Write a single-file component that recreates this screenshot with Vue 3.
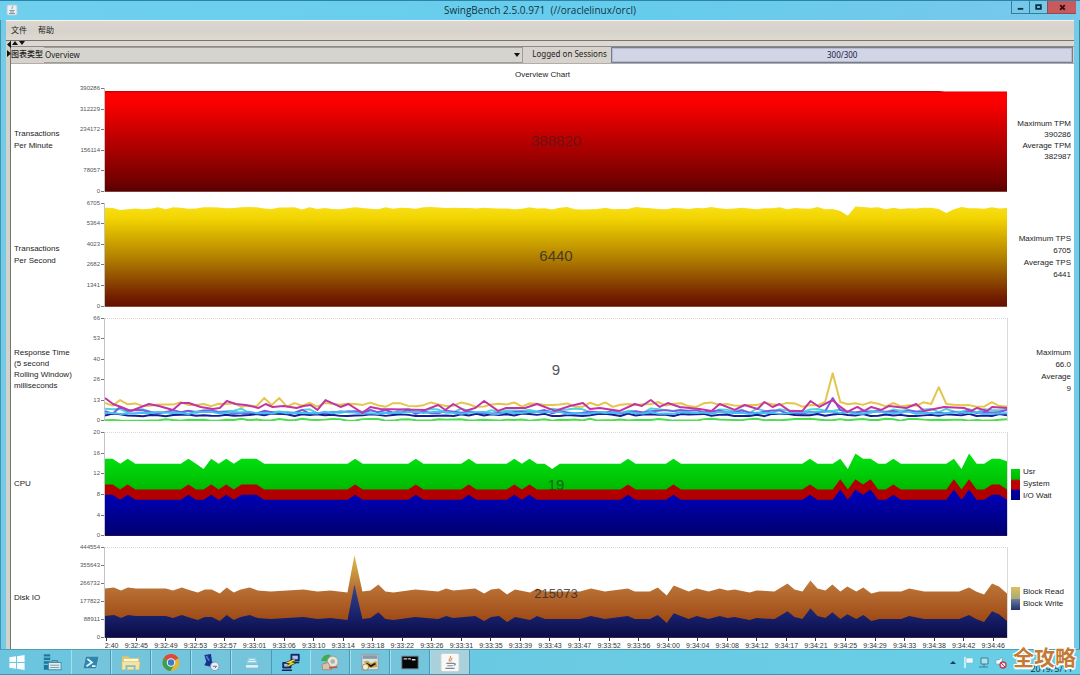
<script setup>
const LEFT = 104
const STEP = 904 / 119

const noise = (i, seed) => {
  const v = Math.sin(i * 12.9898 + seed * 78.233) * 43758.5453
  return v - Math.floor(v)
}
const xAt = (i) => Math.round((LEFT + i * STEP) * 10) / 10

function wave(base, spread, seed, peaks = {}) {
  return Array.from({ length: 120 }, (_, i) => {
    const y = i in peaks ? peaks[i] : base + (noise(i, seed) - 0.5) * spread
    return [xAt(i), Math.round(y * 10) / 10]
  })
}
const line = (pts) => pts.map((p) => p.join(',')).join(' ')
const area = (pts, bottom) => `${LEFT},${bottom} ${line(pts)} 1008,${bottom}`

/* CPU: percentage per sample */
const cpuTop = Array(120).fill(14)
const cpuSys = Array(120).fill(9)
for (const i of [0, 1, 3, 11, 14, 16, 18, 19, 20, 33, 41, 48, 54, 56, 69, 75, 93, 97, 100, 101, 104, 112, 117, 118]) {
  cpuTop[i] = 15
  cpuSys[i] = 10
}
for (const i of [13, 59, 98, 113]) cpuTop[i] = 13
for (const i of [99, 114]) cpuTop[i] = 16
for (const i of [97, 99, 101, 112, 114]) cpuSys[i] = 11
cpuTop[119] = cpuTop[119] + 0.5
const cpu = (vals, less = 0) => vals.map((v, i) => [xAt(i), Math.round((536 - (v - less) * 5.2) * 10) / 10])

/* Disk: sampled curve, write follows read */
const read = [
  [104, 588], [113, 587], [120, 590], [127, 587], [135, 588], [165, 588], [172, 590], [181, 587], [190, 590],
  [197, 592], [204, 589], [211, 589], [219, 593], [226, 587], [233, 592], [240, 589], [249, 587], [257, 590],
  [270, 591], [303, 589], [317, 591], [330, 590], [347, 592], [354, 554], [362, 591], [370, 590], [378, 584],
  [385, 591], [393, 592], [415, 589], [438, 591], [446, 588], [453, 590], [475, 588], [484, 593], [491, 589],
  [499, 588], [507, 594], [515, 589], [530, 592], [537, 588], [545, 591], [580, 591], [591, 588], [605, 591],
  [628, 588], [635, 591], [650, 591], [658, 587], [667, 595], [674, 585], [689, 591], [697, 588], [709, 591],
  [720, 588], [728, 590], [735, 589], [745, 591], [750, 592], [757, 590], [775, 591], [788, 583], [795, 589],
  [803, 591], [811, 580], [818, 588], [826, 590], [833, 584], [841, 591], [848, 586], [857, 591], [864, 587],
  [872, 593], [880, 591], [902, 591], [910, 588], [925, 591], [960, 591], [970, 587], [977, 591], [985, 594],
  [993, 583], [1000, 586], [1008, 593],
]
const write = read.map(([x, y]) => [x, x === 354 ? 584 : y + 28])

const magenta = [
  [104, 398], [112, 404], [120, 407], [130, 411], [148, 404], [158, 406], [172, 410], [180, 403], [188, 403],
  [200, 407], [212, 409], [219, 408], [226, 401], [235, 404], [245, 405], [258, 408], [265, 404], [272, 407],
  [283, 406], [296, 408], [303, 406], [310, 405], [317, 410], [325, 400], [340, 407], [348, 404], [362, 413],
  [370, 407], [380, 409], [425, 410], [438, 405], [445, 410], [453, 404], [465, 411], [475, 408], [484, 401],
  [498, 411], [506, 408], [525, 408], [537, 404], [555, 411], [570, 406], [583, 403], [590, 409], [600, 408],
  [620, 411], [635, 404], [642, 406], [651, 400], [660, 407], [668, 403], [680, 407], [700, 409], [712, 411],
  [720, 404], [735, 410], [745, 405], [758, 409], [765, 402], [773, 407], [780, 404], [790, 411], [803, 411],
  [811, 401], [820, 407], [833, 400], [840, 406], [848, 412], [858, 407], [865, 411], [872, 407], [882, 410],
  [890, 406], [907, 408], [917, 404], [925, 411], [945, 407], [965, 408], [972, 411], [978, 408], [988, 411],
  [993, 407], [1008, 408],
]

const charts = [
  {
    id: 'tpm', label: ['Transactions', 'Per Minute'], view: '104 88 904 104', value: '388820', size: 'big',
    ticks: ['390286', '312229', '234172', '156114', '78057', '0'],
    areas: [{ fill: 'url(#gRed)', points: '104,192 104,90 940,90 946,90.6 1008,90.6 1008,192' }],
    stats: ['Maximum TPM', '390286', 'Average TPM', '382987'],
  },
  {
    id: 'tps', label: ['Transactions', 'Per Second'], view: '104 203 904 104', value: '6440', size: 'big',
    ticks: ['6705', '5364', '4023', '2682', '1341', '0'],
    areas: [{ fill: 'url(#gGold)', points: area(wave(207.3, 2.6, 3, { 2: 209, 96: 208, 97: 210, 98: 215, 99: 205.5, 110: 208, 111: 212 }), 307) }],
    stats: ['Maximum TPS', '6705', 'Average TPS', '6441'], cut: true,
  },
  {
    id: 'rt', label: ['Response Time', '(5 second', 'Rolling Window)', 'milliseconds'], view: '104 318 904 104', value: '9', size: 'big',
    ticks: ['66', '53', '40', '26', '13', '0'], areas: [],
    lines: [
      { stroke: '#e3c64c', points: line(wave(404.5, 5, 1, { 2: 400, 21: 398, 22: 405, 23: 398, 95: 402, 96: 373, 97: 402, 109: 404, 110: 387, 111: 404 })) },
      { stroke: '#4fd4dc', points: line(wave(411, 5, 5)) },
      { stroke: '#7a5be0', points: line(wave(412, 4, 8, { 2: 407, 96: 398 })) },
      { stroke: '#141d94', points: line(wave(415, 2.6, 11)) },
      { stroke: '#45bdf2', points: line(wave(413, 2.6, 14)) },
      { stroke: '#c433a4', points: line(magenta) },
      { stroke: '#4be04b', points: line(wave(420, 2, 17)) },
    ],
    stats: ['Maximum', '66.0', 'Average', '9'], cut: true,
  },
  {
    id: 'cpu', label: ['CPU'], view: '104 432 904 104', value: '19', size: 'big',
    ticks: ['20', '16', '12', '8', '4', '0'],
    areas: [
      { fill: 'url(#gGreen)', points: area(cpu(cpuTop), 536) },
      { fill: '#b20000', points: area(cpu(cpuSys), 536) },
      { fill: 'url(#gBlue)', points: area(cpu(cpuSys, 2), 536) },
    ],
    legend: ['Usr', 'System', 'I/O Wait'],
  },
  {
    id: 'disk', label: ['Disk IO'], view: '104 547 904 91', value: '215073', size: 'small',
    ticks: ['444554', '355643', '266732', '177822', '88911', '0'],
    areas: [
      { fill: 'url(#gRead)', points: area(read, 638) },
      { fill: 'url(#gWrite)', points: area(write, 638) },
    ],
    legend: ['Block Read', 'Block Write'],
  },
]

const times = [
  '9:32:40', '9:32:45', '9:32:49', '9:32:53', '9:32:57', '9:33:01', '9:33:06', '9:33:10', '9:33:14', '9:33:18',
  '9:33:22', '9:33:26', '9:33:31', '9:33:35', '9:33:39', '9:33:43', '9:33:47', '9:33:52', '9:33:56', '9:34:00',
  '9:34:04', '9:34:08', '9:34:12', '9:34:17', '9:34:21', '9:34:25', '9:34:29', '9:34:33', '9:34:38', '9:34:42', '9:34:46',
]
</script>

<template>
  <div class="screen">
    <header class="titlebar">
      <svg class="java" viewBox="0 0 12 12" aria-hidden="true">
        <rect x="1" y="1" width="10" height="10" rx="1" fill="#e9f0f3" stroke="#b4cbd6" />
        <path d="M6.5 2c1 1-1.600 1.600-.5 3M3.500 6.500h5M4 8h4M3 9.500h6" fill="none" stroke="#6d7f93" stroke-width=".8" />
      </svg>
      <h1>SwingBench 2.5.0.971&nbsp; (//oraclelinux/orcl)</h1>
      <div class="winbtns">
        <button type="button" aria-label="Minimize"><svg viewBox="0 0 18 13"><path d="M6 8.500h6" stroke="#0b3344" stroke-width="2" /></svg></button>
        <button type="button" aria-label="Maximize"><svg viewBox="0 0 18 13"><rect x="6.500" y="4.500" width="5" height="4" fill="none" stroke="#0b3344" stroke-width="2" /></svg></button>
        <button type="button" class="close" aria-label="Close"><svg viewBox="0 0 28 13"><path d="M12 4.500l5 5M17 4.500l-5 5" stroke="#3c0d10" stroke-width="2" /></svg></button>
      </div>
    </header>

    <div class="frame">
      <nav class="menu">
        <button type="button">文件</button>
        <button type="button">帮助</button>
      </nav>

      <div class="work">
        <div class="splitter">
          <svg viewBox="0 0 5 18" aria-hidden="true"><path d="M5 0v7L1 3.500zM1 9v7l4-3.500z" fill="#111" /></svg>
        </div>
        <main class="pane">
          <div class="strip">
            <svg viewBox="0 0 14 4" aria-hidden="true"><path d="M1 4l3-4 3 4zM8 0h6l-3 4z" fill="#111" /></svg>
          </div>
          <div class="tools">
            <label class="kind" for="kind">图表类型</label>
            <span class="combo">
              <select id="kind"><option>Overview</option></select>
              <svg viewBox="0 0 6 4" aria-hidden="true"><path d="M0 0h6L3 4z" fill="#111" /></svg>
            </span>
            <span id="sess" class="sess">Logged on Sessions</span>
            <div class="progress" role="progressbar" aria-labelledby="sess" aria-valuenow="300" aria-valuemax="300">300/300</div>
          </div>

          <section class="board">
            <h2>Overview Chart</h2>
            <svg class="defs" aria-hidden="true">
              <defs>
                <linearGradient id="gRed" x1="0" y1="0" x2="0" y2="1"><stop offset="0" stop-color="#c00000" /><stop offset=".02" stop-color="#ff0000" /><stop offset=".12" stop-color="#fa0000" /><stop offset=".9" stop-color="#720000" /><stop offset="1" stop-color="#560000" /></linearGradient>
                <linearGradient id="gGold" x1="0" y1="0" x2="0" y2="1"><stop offset="0" stop-color="#f7df18" /><stop offset=".12" stop-color="#f2d400" /><stop offset=".55" stop-color="#ac7800" /><stop offset=".9" stop-color="#731f00" /><stop offset="1" stop-color="#641000" /></linearGradient>
                <linearGradient id="gGreen" gradientUnits="userSpaceOnUse" x1="0" y1="453" x2="0" y2="490"><stop offset="0" stop-color="#00e410" /><stop offset="1" stop-color="#00b800" /></linearGradient>
                <linearGradient id="gBlue" gradientUnits="userSpaceOnUse" x1="0" y1="490" x2="0" y2="536"><stop offset="0" stop-color="#0000bd" /><stop offset="1" stop-color="#00006e" /></linearGradient>
                <linearGradient id="gRead" gradientUnits="userSpaceOnUse" x1="0" y1="554" x2="0" y2="620"><stop offset="0" stop-color="#dcc04c" /><stop offset=".5" stop-color="#b97235" /><stop offset="1" stop-color="#a04a16" /></linearGradient>
                <linearGradient id="gWrite" gradientUnits="userSpaceOnUse" x1="0" y1="584" x2="0" y2="638"><stop offset="0" stop-color="#3c4886" /><stop offset=".6" stop-color="#17206a" /><stop offset="1" stop-color="#0b0b45" /></linearGradient>
              </defs>
            </svg>

            <div v-for="c in charts" :key="c.id" class="row" :class="c.id">
              <div class="name"><span v-for="l in c.label" :key="l">{{ l }}</span></div>
              <ul class="axis"><li v-for="t in c.ticks" :key="t">{{ t }}</li></ul>
              <div class="plot">
                <svg :viewBox="c.view" preserveAspectRatio="none">
                  <polygon v-for="(a, i) in c.areas" :key="i" :points="a.points" :fill="a.fill" />
                  <polyline v-for="(l, i) in c.lines" :key="'l' + i" :points="l.points" :stroke="l.stroke" fill="none" stroke-width="2" stroke-linejoin="round" />
                </svg>
                <output :class="c.size">{{ c.value }}</output>
              </div>
              <div v-if="c.stats" class="stats" :class="{ cut: c.cut }"><span v-for="(s, i) in c.stats" :key="i">{{ s }}</span></div>
              <div v-else class="legend">
                <i></i>
                <div><span v-for="s in c.legend" :key="s">{{ s }}</span></div>
              </div>
            </div>

            <div class="timeline">
              <div class="times"><span v-for="t in times" :key="t">{{ t }}</span></div>
            </div>
          </section>
        </main>
      </div>
    </div>

    <footer class="taskbar">
      <button type="button" class="start" aria-label="Start">
        <svg viewBox="0 0 20 20"><path d="M2 4.500l7-1v6H2zM10 3.300l8-1.300v7.500h-8zM2 10.500h7v6l-7-1zM10 10.500h8V18l-8-1.300z" fill="#f8feff" /></svg>
      </button>
      <div class="apps">
        <button type="button" aria-label="Server Manager">
          <svg viewBox="0 0 22 20"><path d="M2 1h7v17H2z" fill="#1b789c" /><path d="M2 4h7M2 8h7M2 12h7" stroke="#8edcf0" /><rect x="7" y="10" width="14" height="8" fill="#e3ecf0" stroke="#3e87a2" /><path d="M9 13h10M9 15.500h10" stroke="#7897a6" /><path d="M11 9.500V8h6v1.500" fill="none" stroke="#3c7088" /></svg>
        </button>
        <button type="button" class="open" aria-label="PowerShell">
          <svg viewBox="0 0 22 20"><path d="M5 3h15l-3 14H2z" fill="#2e86ad" stroke="#8fcbe0" /><path d="M7 6l5 4-6 4M12 14h4" fill="none" stroke="#e4f6fc" stroke-width="2" /></svg>
        </button>
        <button type="button" class="open" aria-label="Explorer">
          <svg viewBox="0 0 22 20"><path d="M1 3h7l2 2h10v13H1z" fill="#dfc46b" /><path d="M3 6h16v4H3z" fill="#fff9e0" /><path d="M1 9h20l-1 9H1z" fill="#f5e5a0" stroke="#d3b65a" stroke-width=".6" /><path d="M6 18v-4h9v4" fill="none" stroke="#79bdd6" stroke-width="2" /></svg>
        </button>
        <button type="button" class="open" aria-label="Chrome">
          <svg viewBox="0 0 20 20"><circle cx="10" cy="10" r="9" fill="#e0b834" /><path d="M10 10L2.200 5.500A9 9 0 0 1 17.800 5.500z" fill="#d94b3c" /><path d="M10 10L2.200 5.500A9 9 0 0 0 9.500 19l4-7z" fill="#3f9c50" /><circle cx="10" cy="10" r="4.500" fill="#f4f7f4" /><circle cx="10" cy="10" r="3.400" fill="#3d7bcf" /></svg>
        </button>
        <button type="button" class="open" aria-label="Remote tool">
          <svg viewBox="0 0 20 20"><path d="M3 2l7-1 1 8 4 2-3 4-9-2 2-4z" fill="#17318e" /><path d="M5 3l3 5" stroke="#5a86d6" stroke-width="1.500" /><circle cx="14" cy="14" r="4.500" fill="#e9eff5" stroke="#8098b4" /><path d="M12 14h4l-2 2" fill="none" stroke="#56718e" /></svg>
        </button>
        <button type="button" class="open" aria-label="Drive">
          <svg viewBox="0 0 20 20"><path d="M6 5h8l2 6H4z" fill="#8fd0e6" /><path d="M3 12h14v4H3z" fill="#d9f1f8" stroke="#7ab6cc" /><path d="M7 7h6M6 9h8" stroke="#e6f8fc" /></svg>
        </button>
        <button type="button" aria-label="PuTTY">
          <svg viewBox="0 0 22 20"><path d="M11 1h9v7h-9zM2 10h9v6H2z" fill="#23318e" stroke="#111a46" /><path d="M12.500 2.500h6v4h-6zM3.500 11.500h6v3h-6z" fill="#a9c6ee" /><path d="M1 18.500h11M11 10h9" stroke="#14205a" stroke-width="1.800" /><path d="M15 7l-7 3 5 1-6 3" fill="none" stroke="#2a2a18" stroke-width="3" /><path d="M15 7l-7 3 5 1-6 3" fill="none" stroke="#eedc3c" stroke-width="1.600" /></svg>
        </button>
        <button type="button" class="open" aria-label="Configuration">
          <svg viewBox="0 0 22 20"><path d="M1 8c2-6 7-8 11-6l-5 7z" fill="#3fab54" /><circle cx="14" cy="9" r="6" fill="#e7e4da" stroke="#9e9b8b" /><circle cx="14" cy="9" r="2.500" fill="#a5b7a5" /><path d="M2 12l7-2 4 8H3z" fill="#d9c3a8" stroke="#a18a78" /><path d="M10 16l9-1" stroke="#c0564b" stroke-width="2" /></svg>
        </button>
        <button type="button" class="open" aria-label="Database tool">
          <svg viewBox="0 0 22 20"><rect x="2" y="1" width="18" height="17" fill="#dde2e4" stroke="#8a9aa3" /><path d="M3 2h16v4H3z" fill="#899ba8" /><path d="M4 9l5-1 3 3 6-3 1 7-8 1z" fill="#c9a63c" /><path d="M7 11l5 3 5-3" fill="none" stroke="#211d10" stroke-width="2" /><circle cx="6" cy="15" r="3.500" fill="#f4ebc4" stroke="#8b865e" /></svg>
        </button>
        <button type="button" class="open" aria-label="Command Prompt">
          <svg viewBox="0 0 22 20"><rect x="2" y="3" width="18" height="14" fill="#050708" stroke="#71858f" /><path d="M4 6h4M9 6h3M13 7h4" stroke="#dadada" stroke-width="1.500" /></svg>
        </button>
        <button type="button" class="open active" aria-label="SwingBench">
          <svg viewBox="0 0 22 20"><rect x="1" y="0" width="20" height="20" rx="2" fill="#f8f8f6" stroke="#c8ced1" /><path d="M11 3c3 2-3 3-.5 6M13 5c1 1-2 2-1 4" fill="none" stroke="#dd8c4a" stroke-width="1.200" /><path d="M7 11h8M8 13.500h6M6 16.500h10M15 11c3 0 2 2 0 2" fill="none" stroke="#7789a0" stroke-width="1.200" /></svg>
        </button>
      </div>
      <div class="tray">
        <svg viewBox="0 0 60 14" aria-hidden="true">
          <path d="M2 9l3-3 3 3z" fill="#163c50" />
          <path d="M17 2v11" stroke="#e9fbff" stroke-width="1.500" /><path d="M18 3h7v5h-7z" fill="#e9fbff" stroke="#7daebd" stroke-width=".5" />
          <path d="M33 3h7v6h-7zM31 12h9M36 9v3" fill="#aee0ee" stroke="#3f7f96" />
          <path d="M48 5h3l3-3v10l-3-3h-3z" fill="#f0fbff" stroke="#6a93a2" stroke-width=".5" /><circle cx="55" cy="10" r="3" fill="#f7e1e5" stroke="#c23c55" stroke-width="1.300" /><path d="M53 8l4 4" stroke="#c23c55" />
        </svg>
        <time datetime="2019-05-11">2019/5/11</time>
      </div>
    </footer>
    <div class="mark">全攻略</div>
  </div>
</template>

<style>
html, body { margin: 0; height: 100%; overflow: hidden; }
</style>

<style scoped>
.screen { position: relative; display: flex; flex-direction: column; height: 100vh; box-sizing: border-box; background: #6fcdeb; font-family: "Liberation Sans", "Noto Sans CJK SC", sans-serif; font-size: 8px; color: #1c1c1c; }
.screen * { box-sizing: border-box; }
button { border: 0; padding: 0; background: none; font: inherit; color: inherit; }
h1, h2, ul { margin: 0; padding: 0; font-weight: normal; list-style: none; }

.titlebar { display: grid; grid-template-columns: 1fr auto 1fr; align-items: start; height: 20px; flex: none; border-top: 1px solid #2c83a8; background: linear-gradient(90deg, #6fd0ee, #66ccec 60%, #78c8e9); }
.java { width: 12px; height: 12px; margin: 3px 0 0 6px; }
h1 { font: 10px/19px "Open Sans", "Noto Sans", sans-serif; color: #0f3444; }
.winbtns { display: flex; justify-self: end; margin-right: 4px; }
.winbtns button { width: 18px; height: 13px; border: 1px solid #2f7f9d; border-top: 0; border-right: 0; }
.winbtns svg { display: block; width: 100%; height: 100%; }
.winbtns .close { width: 29px; background: #c65a5c; border-color: #8f4a55; }

.frame { flex: 1; min-height: 0; display: flex; flex-direction: column; border-left: 1px solid #3f94b4; border-right: 1px solid #2f86a8; padding: 0 5px; background: #74cbe6; }
.menu { display: flex; gap: 11px; height: 21px; flex: none; padding-left: 5px; border-top: 1px solid #f4f4f2; border-bottom: 1px solid #77736e; background: linear-gradient(#dcd6ce, #d6d3cc 50%, #dfd9d0); }
.menu button, .kind { font: 8px/16px "Noto Sans CJK SC", sans-serif; }
.menu button { height: 17px; }
.work { flex: 1; min-height: 0; display: flex; }
.splitter { width: 5px; background: #d2d2cc; border-right: 1px solid #77736e; }
.splitter svg { display: block; width: 5px; height: 18px; }
.pane { flex: 1; min-width: 0; display: flex; flex-direction: column; background: #fff; }
.strip { height: 6px; flex: none; background: #dcd8d2; border-bottom: 1px solid #8d8984; }
.strip svg { display: block; width: 14px; height: 4px; }
.tools { display: flex; height: 17px; flex: none; background: #d7d3cc; border-bottom: 1px solid #b1aea9; font-family: "Noto Sans", sans-serif; }
.kind { line-height: 14px; font-weight: 500; }
.combo { position: relative; flex: 480 1 0; display: flex; margin-left: 1px; }
.combo select { flex: 1; appearance: none; border: 1px solid #a09d98; border-left: 0; border-radius: 0; padding: 0 0 2px 1px; background: #d6d5cd; font: inherit; color: inherit; }
.combo svg { position: absolute; right: 3px; top: 6px; width: 6px; height: 4px; pointer-events: none; }
.sess { width: 88px; padding-left: 4px; line-height: 14px; text-align: center; }
.progress { flex: 460 1 0; border: 1px solid #747d92; box-shadow: inset 0 0 0 1px #b4bad0; background: #d1d5e6; line-height: 13px; text-align: center; color: #1c2044; margin-right: 1px; }

.board { flex: 1; min-height: 0; display: grid; grid-template-rows: 13px 104fr 104fr 104fr 104fr 91fr 0; row-gap: 11px; }
h2 { font-size: 8px; line-height: 21px; text-align: center; }
.defs { position: absolute; width: 0; height: 0; }
.row { display: grid; grid-template-columns: 62px 32px minmax(0, 1fr) 66px; min-height: 0; }
.name { display: flex; flex-direction: column; justify-content: center; padding-left: 3px; line-height: 12px; white-space: nowrap; }
.rt .name { line-height: 11px; }
.disk .name, .disk .legend { padding-top: 11px; }
.axis { display: flex; flex-direction: column; justify-content: space-between; font-size: 6px; color: #555; border-right: 1px solid #c4c4c4; }
.axis li { display: flex; justify-content: flex-end; align-items: center; height: 1px; line-height: 1px; }
.axis li::after { content: ""; width: 3px; height: 1px; margin-left: 1px; background: #777; }
.plot { display: grid; min-height: 0; border-top: 1px dotted #d9d9d9; border-right: 1px solid #d9d9d9; }
.tpm .plot, .tps .plot { border-color: transparent; }
.plot > * { grid-area: 1 / 1; min-height: 0; }
.plot svg { width: 100%; height: 100%; display: block; }
.plot output { place-self: center; color: #2b2b2b; opacity: 0.8; }
.plot .big { font-size: 15px; }
.plot .small { font-size: 13px; }
.tpm output { color: #4c1c1c; opacity: 0.7; }
.cpu output { color: #174f17; }
.stats { display: flex; flex-direction: column; justify-content: center; text-align: right; line-height: 11px; padding-right: 3px; white-space: nowrap; }
.stats.cut { line-height: 12px; }
.cut span:last-child { height: 8px; overflow: hidden; }
.legend { display: flex; align-items: center; gap: 3px; padding-left: 3px; line-height: 12px; white-space: nowrap; }
.legend span { display: block; }
.legend i { width: 9px; height: 31px; background: linear-gradient(#00d400, #00b800 32%, #bd0000 38%, #bd0000 64%, #0000a8 70%, #000080); }
.disk .legend i { height: 23px; background: linear-gradient(#dcc15b, #a9aa78 50%, #65799b 55%, #25306e); }
.timeline { margin: -11px 66px 0 94px; height: 11px; overflow: hidden; }
.times { display: grid; grid-template-columns: repeat(31, minmax(0, 1fr)); margin-left: -13px; font-size: 7px; line-height: 12px; color: #333; }
.times span { display: flex; flex-direction: column; align-items: center; white-space: nowrap; }
.times span::before { content: ""; width: 1px; height: 3px; margin-bottom: -1px; background: #333; }

.taskbar { display: flex; height: 26px; flex: none; border-top: 1px solid #4c9fb8; border-bottom: 1px solid #3d93b3; background: linear-gradient(90deg, #6cc5df, #68cfe6); }
.taskbar button { display: flex; align-items: center; justify-content: center; }
.taskbar button svg { width: 20px; height: 19px; }
.start { width: 33px; }
.apps { flex: 0 1 437px; display: flex; }
.apps button { flex: 1; }
.apps .open { border-left: 1px solid #a5dfee; border-right: 1px solid #489bb7; background: #74c5dc; }
.apps .active { background: #a9d1dc; }
.tray { margin-left: auto; display: flex; align-items: flex-end; gap: 22px; padding-right: 7px; }
.tray svg { width: 60px; height: 14px; align-self: center; }
.tray time { font: 9px/11px "Open Sans", sans-serif; color: #15333f; }
.mark { position: absolute; right: 4px; bottom: 7px; font: bold 21px/24px "Noto Sans CJK SC", sans-serif; color: #c47a35; text-shadow: -1px -1px #fff, 1px -1px #fff, -1px 1px #fff, 1px 1px #fff, 0 2px #fff; }
</style>
